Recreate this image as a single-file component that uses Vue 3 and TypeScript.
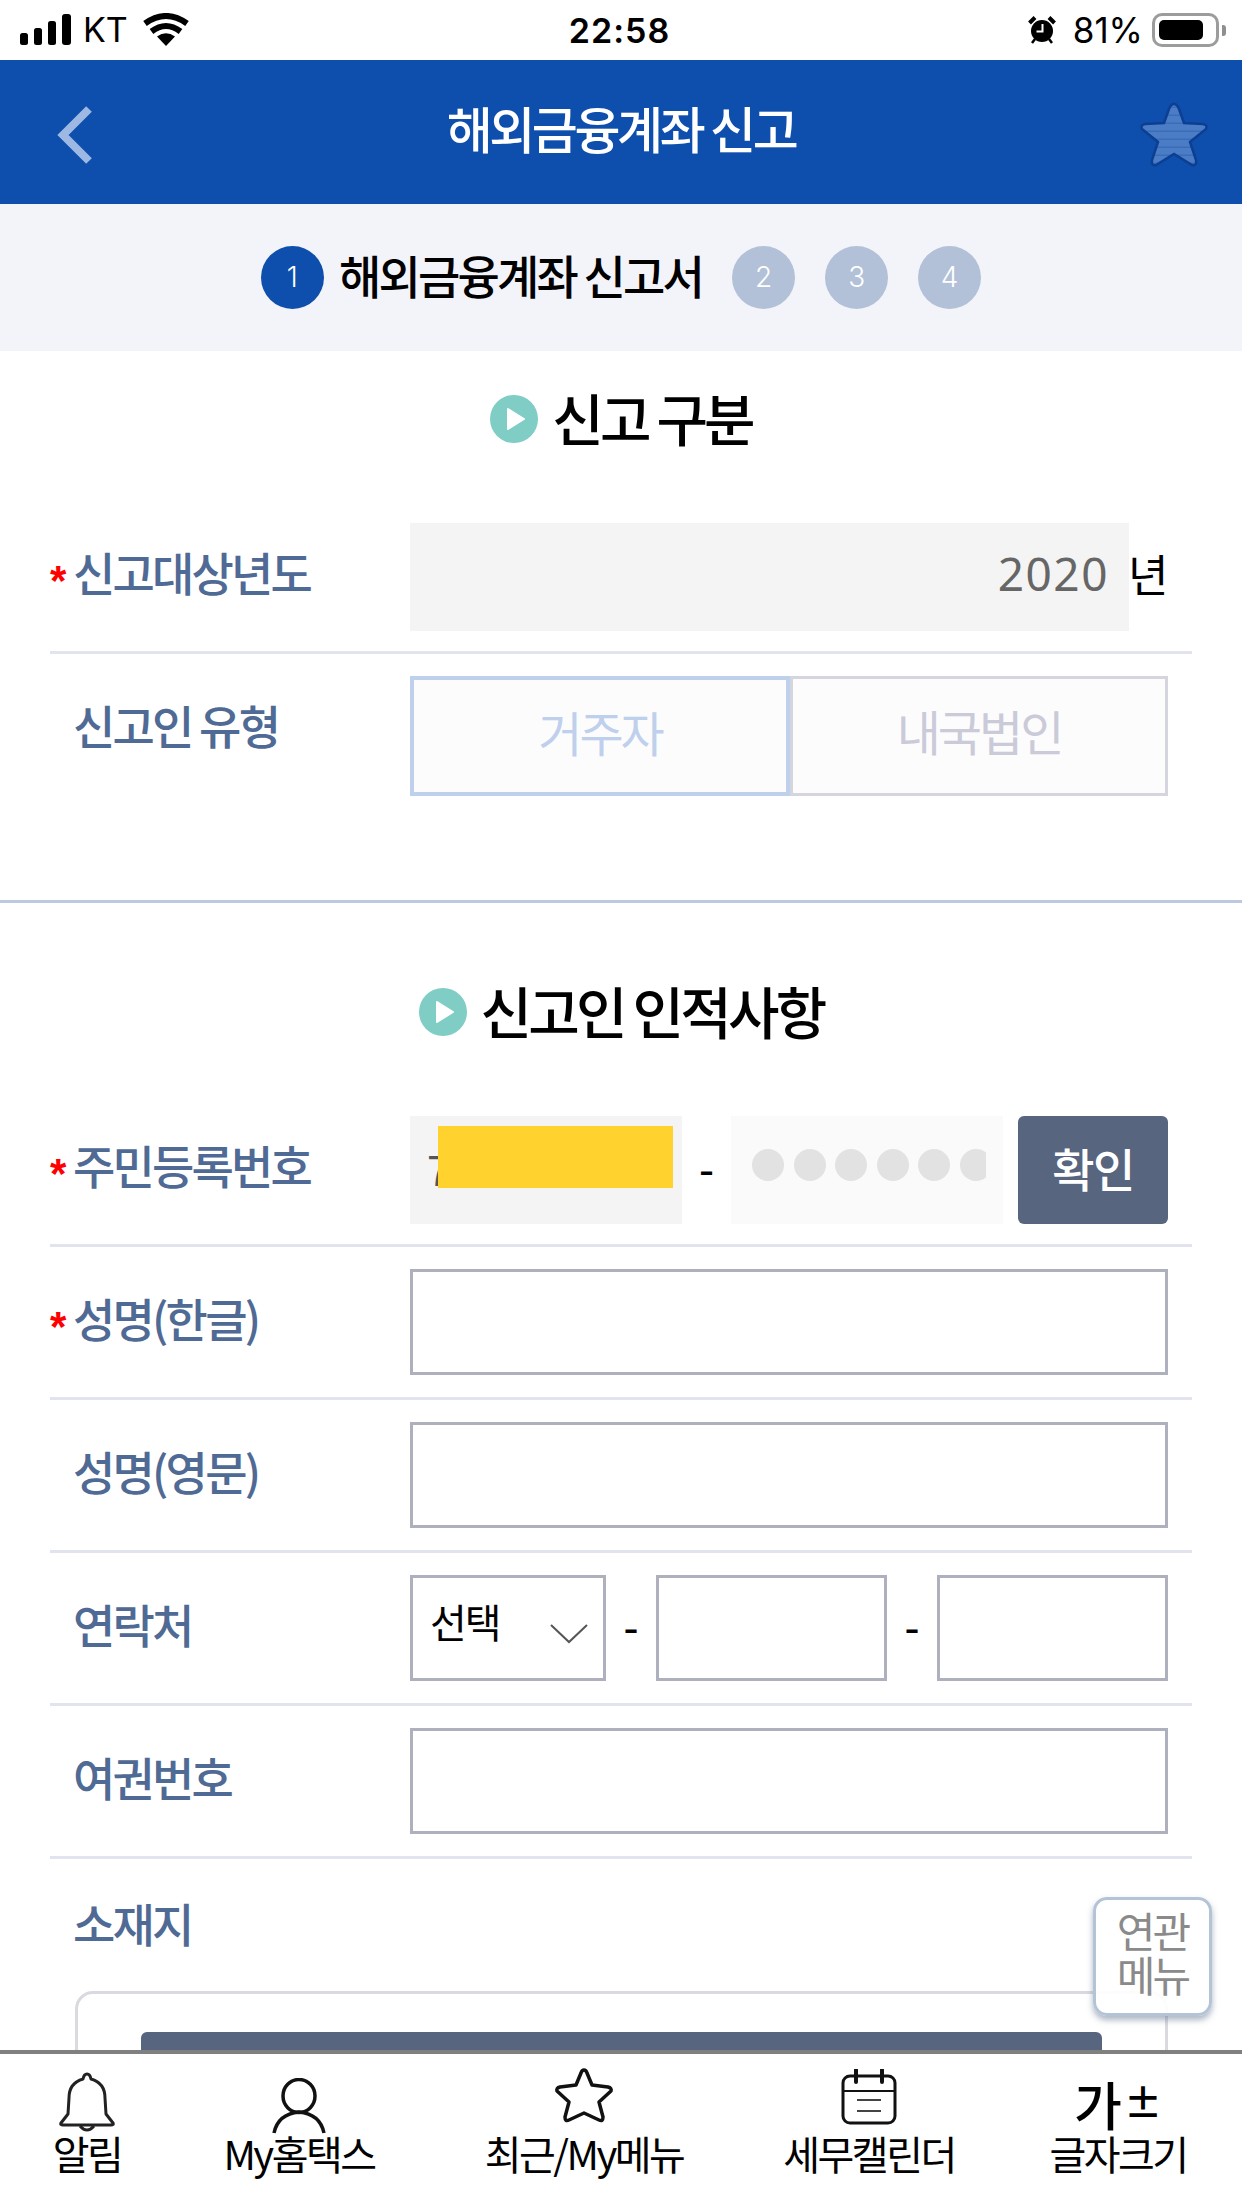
<template>
  <div class="page">
    <div class="status">
      <div class="status-left">
        <svg width="52" height="32" viewBox="0 0 52 32">
          <rect x="0" y="19" width="8" height="12" rx="2.5" />
          <rect x="14" y="14" width="8" height="17" rx="2.5" />
          <rect x="28" y="7" width="8" height="24" rx="2.5" />
          <rect x="42" y="0" width="9" height="31" rx="3" />
        </svg>
        <span class="carrier">KT</span>
        <svg width="46" height="34" viewBox="0 0 46 34">
          <path d="M23 33 L14 23.500 Q23 17 32 23.500 Z" fill="#000" />
          <path d="M8.500 18.500 Q23 7.500 37.500 18.500" fill="none" stroke="#000" stroke-width="6" />
          <path d="M2 10.500 Q23 -4.500 44 10.500" fill="none" stroke="#000" stroke-width="6" />
        </svg>
      </div>
      <div class="clock">22:58</div>
      <div class="status-right">
        <svg width="28" height="28" viewBox="0 0 28 28">
          <circle cx="14" cy="15" r="11" fill="#000" />
          <path d="M1.500 7 L7 1.500 M26.500 7 L21 1.500" stroke="#000" stroke-width="4" />
          <path d="M4 27 L7 23 M24 27 L21 23" stroke="#000" stroke-width="2.500" />
          <path d="M14.500 8 V15.500 H8.500" fill="none" stroke="#fff" stroke-width="2" />
        </svg>
        <span class="battery-text">81%</span>
        <div class="battery"><div class="battery-fill"></div></div>
        <div class="battery-nub"></div>
      </div>
    </div>

    <header class="topbar">
      <svg class="back" width="36" height="58" viewBox="0 0 36 58">
        <path d="M32 3 L6 29 L32 55" fill="none" stroke="#9DB8E2" stroke-width="8" />
      </svg>
      <h1 class="topbar-title">해외금융계좌 신고</h1>
      <svg class="fav" width="72" height="70" viewBox="0 0 72 70">
        <defs>
          <pattern id="stripes" width="8" height="8" patternUnits="userSpaceOnUse">
            <rect width="8" height="8" fill="#4B7DC6" />
            <rect y="6.500" width="8" height="1.500" fill="#3B6CB6" />
          </pattern>
        </defs>
        <path
          d="M36 4 Q39 4 41 9 L46 23 L65 24 Q70 25 68 29 L52 42 L58 60 Q59 66 54 65 L36 54 L18 65 Q13 66 14 60 L20 42 L4 29 Q2 25 7 24 L26 23 L31 9 Q33 4 36 4 Z"
          fill="url(#stripes)"
          stroke="#0C3F92"
          stroke-width="2.500"
        />
      </svg>
    </header>

    <div class="steps">
      <span class="step on">1</span>
      <span class="step-label">해외금융계좌 신고서</span>
      <span v-for="n in [2, 3, 4]" :key="n" class="step">{{ n }}</span>
    </div>

    <section class="block first">
      <h2 class="block-title">
        <svg class="play" width="48" height="48" viewBox="0 0 48 48">
          <circle cx="24" cy="24" r="24" fill="#7FCDC5" />
          <path d="M18 14 L34 24 L18 34 Z" fill="#fff" stroke="#fff" stroke-width="2" stroke-linejoin="round" />
        </svg>
        신고 구분
      </h2>
      <div class="row">
        <div class="label"><i>*</i>신고대상년도</div>
        <div class="field tall">
          <div class="year-box">2020</div>
          <span class="year-unit">년</span>
        </div>
      </div>
      <div class="row plain">
        <div class="label"><i></i>신고인 유형</div>
        <div class="field toggle">
          <div class="toggle-btn active">거주자</div>
          <div class="toggle-btn">내국법인</div>
        </div>
      </div>
    </section>

    <section class="block second">
      <h2 class="block-title">
        <svg class="play" width="48" height="48" viewBox="0 0 48 48">
          <circle cx="24" cy="24" r="24" fill="#7FCDC5" />
          <path d="M18 14 L34 24 L18 34 Z" fill="#fff" stroke="#fff" stroke-width="2" stroke-linejoin="round" />
        </svg>
        신고인 인적사항
      </h2>
      <div class="row">
        <div class="label"><i>*</i>주민등록번호</div>
        <div class="field tall">
          <div class="rrn front">
            <span>7</span>
            <div class="redact"></div>
          </div>
          <span class="rrn-dash">-</span>
          <div class="rrn back-part">
            <div class="dots">
              <span v-for="n in 6" :key="n" class="dot"></span>
            </div>
          </div>
          <button class="confirm">확인</button>
        </div>
      </div>
      <div v-for="name in ['성명(한글)', '성명(영문)']" :key="name" class="row">
        <div class="label"><i v-if="name === '성명(한글)'">*</i><i v-else></i>{{ name }}</div>
        <div class="field"><div class="input full"></div></div>
      </div>
      <div class="row">
        <div class="label"><i></i>연락처</div>
        <div class="field">
          <div class="input select">
            <span>선택</span>
            <svg width="38" height="20" viewBox="0 0 38 20">
              <path d="M1 1 L19 18 L37 1" fill="none" stroke="#555" stroke-width="2" />
            </svg>
          </div>
          <span class="tel-dash">-</span>
          <div class="input tel"></div>
          <span class="tel-dash">-</span>
          <div class="input tel"></div>
        </div>
      </div>
      <div class="row">
        <div class="label"><i></i>여권번호</div>
        <div class="field"><div class="input full"></div></div>
      </div>
      <div class="location">
        <div class="label"><i></i>소재지</div>
        <div class="location-box">
          <div class="location-btn"></div>
        </div>
      </div>
    </section>

    <div class="related">연관<br />메뉴</div>

    <nav class="tabbar">
      <div class="tab">
        <div class="tab-ico">
          <svg width="56" height="62" viewBox="0 0 56 62">
            <path
              d="M28 2 Q31 2 32 7 Q46 11 46 26 L47 42 L54 51 Q55 53 52 53 H4 Q1 53 2 51 L9 42 L10 26 Q10 11 24 7 Q25 2 28 2 Z"
              fill="none" stroke="#222" stroke-width="3" stroke-linejoin="round"
            />
            <path d="M21 54 Q28 62 35 54" fill="none" stroke="#222" stroke-width="3" />
          </svg>
        </div>
        <span>알림</span>
      </div>
      <div class="tab">
        <div class="tab-ico">
          <svg width="54" height="56" viewBox="0 0 54 56">
            <ellipse cx="27" cy="18" rx="16" ry="16.500" fill="none" stroke="#111" stroke-width="3.500" />
            <path d="M2 55 Q6 36 27 34 Q48 36 52 55" fill="none" stroke="#111" stroke-width="3.500" />
          </svg>
        </div>
        <span>My홈택스</span>
      </div>
      <div class="tab raised">
        <div class="tab-ico">
          <svg width="60" height="58" viewBox="0 0 60 58">
            <path
              d="M30 3 Q32 3 33 6 L38 18 L54 20 Q58 21 57 24 L45 35 L49 50 Q49 55 45 53 L30 46 L15 53 Q11 55 11 50 L15 35 L3 24 Q2 21 6 20 L22 18 L27 6 Q28 3 30 3 Z"
              fill="none" stroke="#111" stroke-width="3.500" stroke-linejoin="round"
            />
          </svg>
        </div>
        <span>최근/My메뉴</span>
      </div>
      <div class="tab raised">
        <div class="tab-ico">
          <svg width="56" height="56" viewBox="0 0 56 56">
            <rect x="2" y="7" width="52" height="47" rx="7" fill="none" stroke="#111" stroke-width="3" />
            <path d="M2 22 H54" stroke="#111" stroke-width="2" />
            <path d="M15 1 V13 M41 1 V13" stroke="#111" stroke-width="4" stroke-linecap="round" />
            <path d="M16 31 H40 M16 42 H40" stroke="#444" stroke-width="2" />
          </svg>
        </div>
        <span>세무캘린더</span>
      </div>
      <div class="tab">
        <div class="tab-ico">
          <div class="font-size-ico">가<b>±</b></div>
        </div>
        <span>글자크기</span>
      </div>
    </nav>
  </div>
</template>

<script setup lang="ts">
</script>

<style>
html,
body {
  margin: 0;
  background: #fff;
}
</style>

<style scoped>
.page {
  position: relative;
  width: 1242px;
  height: 2208px;
  overflow: hidden;
  background: #fff;
  color: #000;
  font-family: "Noto Sans CJK KR", "Noto Sans", sans-serif;
}

.status {
  display: grid;
  grid-template-columns: 1fr auto 1fr;
  align-items: center;
  height: 60px;
  padding: 0 20px;
  box-sizing: border-box;
  font-family: Inter, "Noto Sans", sans-serif;
}
.status-left,
.status-right {
  display: flex;
  align-items: center;
}
.status-left {
  gap: 11px;
}
.status-right {
  justify-content: flex-end;
  margin-right: -4px;
}
.carrier {
  font-size: 34px;
  line-height: 60px;
  margin-right: 4px;
}
.clock {
  font-size: 34px;
  font-weight: 600;
  letter-spacing: 1px;
  margin-left: -3px;
}
.battery-text {
  margin: 0 9px 0 17px;
  font-size: 35px;
}
.battery {
  width: 67px;
  height: 34px;
  box-sizing: border-box;
  padding: 4px;
  border: 3px solid #9c9c9c;
  border-radius: 10px;
}
.battery-fill {
  width: 44px;
  height: 100%;
  background: #000;
  border-radius: 5px;
}
.battery-nub {
  width: 4px;
  height: 11px;
  margin-left: 3px;
  background: #8f8f8f;
  border-radius: 0 3px 3px 0;
}

.topbar {
  position: relative;
  display: flex;
  justify-content: center;
  height: 144px;
  background: #0e4ead;
}
.back {
  position: absolute;
  left: 57px;
  top: 46px;
}
.fav {
  position: absolute;
  left: 1138px;
  top: 40px;
}
.topbar-title {
  margin: 0;
  color: #fff;
  font-size: 50px;
  font-weight: 500;
  line-height: 134px;
  letter-spacing: -3.4px;
}

.steps {
  display: flex;
  align-items: center;
  justify-content: center;
  gap: 30px;
  height: 147px;
  box-sizing: border-box;
  background: #f2f4f9;
}
.step {
  width: 63px;
  height: 63px;
  border-radius: 50%;
  background: #b2c1d8;
  color: #fff;
  font-family: Inter, "Noto Sans", sans-serif;
  font-size: 28px;
  font-weight: 300;
  line-height: 63px;
  text-align: center;
}
.step.on {
  background: #0e4ead;
}
.step-label {
  margin: -8px 0 0 -15px;
  font-size: 46px;
  font-weight: 500;
  letter-spacing: -2.8px;
}

.block-title {
  display: flex;
  align-items: center;
  justify-content: center;
  gap: 14px;
  height: 132px;
  margin: 0 0 18px;
  font-size: 56px;
  font-weight: 500;
  letter-spacing: -3.8px;
  line-height: 116px;
}
.play {
  margin-top: 4px;
}
.block.first {
  padding-bottom: 82px;
  border-bottom: 3px solid #bdc9de;
}
.block.second {
  padding-top: 41px;
}

.row {
  display: grid;
  grid-template-columns: 360px 1fr;
  align-items: start;
  width: 1142px;
  margin-left: 50px;
  padding: 22px 0;
  border-bottom: 3px solid #e1e3ee;
}
.row.plain {
  border-bottom: none;
}
.label {
  display: flex;
  width: fit-content;
  height: 102px;
  font-size: 46px;
  font-weight: 500;
  line-height: 96px;
  letter-spacing: -2.800px;
  color: #4f6a94;
  white-space: nowrap;
}
.label i {
  width: 23px;
  height: 102px;
  flex: none;
  color: #f00;
  font-style: normal;
  font-size: 42px;
  line-height: 116px;
  font-weight: 700;
  font-family: "Liberation Sans", sans-serif;
}
.field {
  display: flex;
  align-items: center;
  width: 758px;
  height: 106px;
}
.field.tall {
  height: 108px;
  margin-bottom: -2px;
}
.field.toggle {
  height: 120px;
}

.year-box {
  flex: none;
  width: 719px;
  height: 108px;
  padding-right: 20px;
  box-sizing: border-box;
  background: #f4f4f4;
  color: #666;
  font-family: "Noto Sans", sans-serif;
  font-size: 46px;
  line-height: 100px;
  letter-spacing: 1.500px;
  text-align: right;
}
.year-unit {
  margin: -8px 0 0 -1px;
  font-size: 44px;
}

.toggle-btn {
  flex: none;
  width: 378px;
  height: 120px;
  box-sizing: border-box;
  border: 3px solid #d5d5df;
  background: #fcfcfd;
  color: #cacad8;
  font-size: 48px;
  line-height: 102px;
  letter-spacing: -3px;
  text-align: center;
}
.toggle-btn.active {
  width: 380px;
  border: 4px solid #bfd0ec;
  color: #bfd0ec;
}

.rrn {
  position: relative;
  flex: none;
  width: 272px;
  height: 108px;
  box-sizing: border-box;
  background: #f4f4f4;
  color: #555;
  padding-left: 17px;
  font-size: 42px;
  line-height: 104px;
}
.redact {
  position: absolute;
  left: 28px;
  top: 10px;
  width: 235px;
  height: 62px;
  background: #ffd22e;
}
.rrn-dash {
  flex: none;
  width: 49px;
  font-size: 42px;
  font-weight: 500;
  text-align: center;
  margin-top: -8px;
}
.back-part {
  background: #fafafa;
  padding: 0;
}
.dots {
  display: flex;
  gap: 9.500px;
  width: 234px;
  margin: 33px 0 0 21px;
  overflow: hidden;
}
.dot {
  flex: none;
  width: 32px;
  height: 32px;
  border-radius: 50%;
  background: #e2e2e2;
}
.confirm {
  flex: none;
  width: 150px;
  height: 108px;
  margin-left: 15px;
  padding: 0 0 6px;
  border: none;
  border-radius: 6px;
  background: #57657f;
  color: #fff;
  font-family: inherit;
  font-size: 46px;
  font-weight: 500;
  letter-spacing: -1.500px;
}

.input {
  flex: none;
  height: 106px;
  box-sizing: border-box;
  border: 3px solid #aeb0be;
  background: #fff;
}
.input.full {
  width: 758px;
}
.input.select {
  display: flex;
  justify-content: space-between;
  width: 196px;
  padding: 0 15px 0 17px;
  font-size: 40px;
  line-height: 86px;
  letter-spacing: -2px;
}
.select svg {
  margin-top: 46px;
}
.input.tel {
  width: 231px;
}
.tel-dash {
  flex: none;
  width: 50px;
  font-size: 42px;
  font-weight: 500;
  text-align: center;
  margin-top: -8px;
}

.location {
  margin-left: 50px;
  padding-top: 15px;
}
.location-box {
  width: 1093px;
  height: 300px;
  margin: 15px 0 0 25px;
  box-sizing: border-box;
  padding: 38px 63px 0;
  border: 3px solid #d9d9df;
  border-radius: 18px;
}
.location-btn {
  height: 100px;
  background: #57657f;
  border-radius: 6px;
}

.related {
  position: absolute;
  left: 1093px;
  top: 1897px;
  width: 119px;
  height: 119px;
  box-sizing: border-box;
  padding-top: 8px;
  border: 3px solid #b4c4d6;
  border-radius: 14px;
  background: rgba(255, 255, 255, 0.92);
  box-shadow: 0 4px 6px rgba(90, 110, 140, 0.5);
  color: #8a8a8a;
  font-size: 42px;
  line-height: 44px;
  letter-spacing: -3px;
  text-align: center;
}

.tabbar {
  position: absolute;
  left: 0;
  right: 0;
  top: 2050px;
  bottom: 0;
  display: grid;
  grid-template-columns: 174px 250px 320px 250px 248px;
  border-top: 4px solid #808080;
  background: #fff;
}
.tab {
  display: flex;
  flex-direction: column;
  align-items: center;
  font-size: 40px;
  letter-spacing: -2.5px;
  line-height: 38px;
  white-space: nowrap;
}
.tab-ico {
  display: flex;
  align-items: flex-end;
  height: 80px;
}
.tab.raised .tab-ico {
  padding-bottom: 9px;
  height: 71px;
}
.font-size-ico {
  display: flex;
  align-items: flex-start;
  height: 56px;
  font-size: 52px;
  font-weight: 500;
  line-height: 52px;
  letter-spacing: 0;
}
.font-size-ico b {
  margin-left: 2px;
  font-size: 38px;
  font-weight: 700;
  line-height: 46px;
}
</style>
